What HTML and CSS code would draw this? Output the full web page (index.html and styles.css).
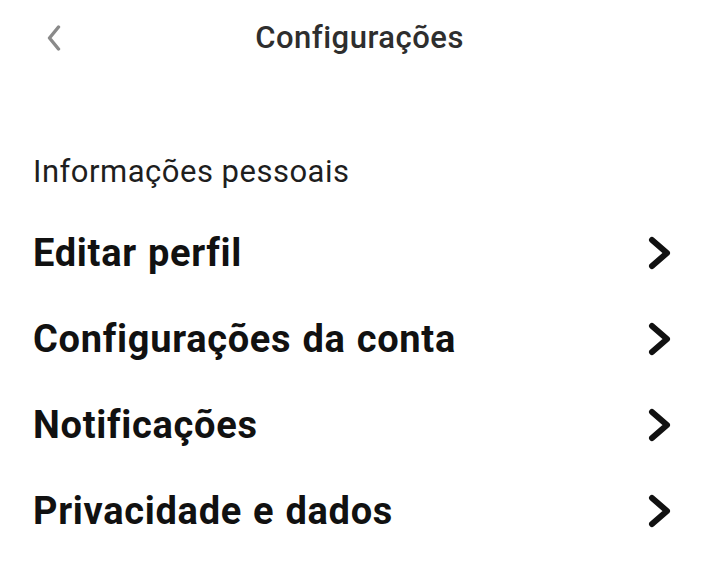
FILE: index.html
```html
<!DOCTYPE html>
<html lang="pt">
<head>
<meta charset="utf-8">
<link rel="stylesheet" href="styles.css">
</head>
<body>
<div class="screen">
  <header class="topbar">
    <button class="back" aria-label="Voltar">
      <svg width="14" height="26" viewBox="0 0 14 26"><path d="M11.5 2 L2.5 13 L11.5 24" fill="none" stroke="#8a8a8a" stroke-width="3.4" stroke-linecap="round" stroke-linejoin="round"/></svg>
    </button>
    <h1 class="title">Configurações</h1>
    <span class="spacer"></span>
  </header>
  <section class="section">
    <h2 class="section-title">Informações pessoais</h2>
    <ul class="menu">
      <li class="item"><span>Editar perfil</span><svg class="chev" width="26" height="34" viewBox="0 0 26 34"><path d="M5 4 L20 17 L5 30" fill="none" stroke="#111" stroke-width="6" stroke-linecap="round" stroke-linejoin="round"/></svg></li>
      <li class="item"><span>Configurações da conta</span><svg class="chev" width="26" height="34" viewBox="0 0 26 34"><path d="M5 4 L20 17 L5 30" fill="none" stroke="#111" stroke-width="6" stroke-linecap="round" stroke-linejoin="round"/></svg></li>
      <li class="item"><span>Notificações</span><svg class="chev" width="26" height="34" viewBox="0 0 26 34"><path d="M5 4 L20 17 L5 30" fill="none" stroke="#111" stroke-width="6" stroke-linecap="round" stroke-linejoin="round"/></svg></li>
      <li class="item"><span>Privacidade e dados</span><svg class="chev" width="26" height="34" viewBox="0 0 26 34"><path d="M5 4 L20 17 L5 30" fill="none" stroke="#111" stroke-width="6" stroke-linecap="round" stroke-linejoin="round"/></svg></li>
    </ul>
  </section>
</div>
</body>
</html>
```
FILE: styles.css
```css
* { box-sizing: border-box; }
html, body { margin: 0; padding: 0; background: #fff; }
body { font-family: Roboto, "Noto Sans", sans-serif; color: #111; }
.screen { width: 719px; height: 586px; overflow: hidden; }
.topbar {
  display: grid;
  grid-template-columns: 1fr auto 1fr;
  align-items: center;
  height: 76px;
}
.back {
  justify-self: start;
  border: 0; background: none; padding: 0; margin: 0 0 0 47px;
  width: 14px; height: 26px; display: flex;
}
.title {
  margin: 0;
  font-size: 31px;
  line-height: 40px;
  font-weight: 500;
  letter-spacing: 0.5px;
  color: #2e2e2e;
  white-space: nowrap;
}
.section { padding: 76px 46px 0 33px; }
.section-title {
  margin: 0;
  font-size: 31px;
  font-weight: 400;
  letter-spacing: 0.5px;
  color: #1e1e1e;
  line-height: 40px;
}
.menu { list-style: none; margin: 18px 0 0; padding: 0; }
.item {
  display: flex;
  justify-content: space-between;
  align-items: center;
  height: 86px;
  font-size: 38px;
  font-weight: 700;
  letter-spacing: 0.7px;
  word-spacing: 1px;
  color: #111;
}
.chev { display: block; }
```
